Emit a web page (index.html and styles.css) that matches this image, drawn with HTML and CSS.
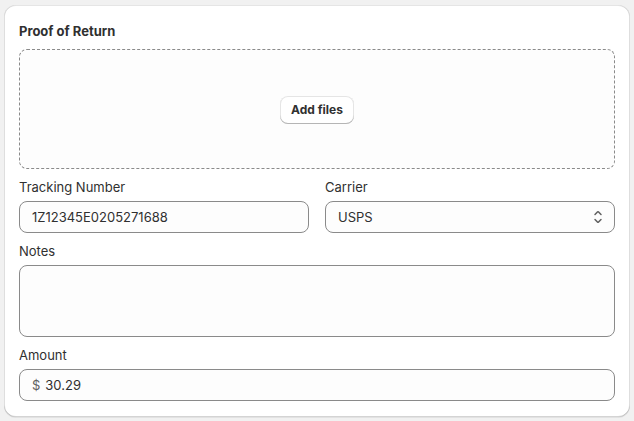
FILE: index.html
```html
<!DOCTYPE html>
<html lang="en">
<head>
<meta charset="utf-8">
<title>Proof of Return</title>
<link rel="stylesheet" href="styles.css">
</head>
<body>
<div class="card">
  <div class="title">Proof of Return</div>
  <div class="dropzone">
    <button class="btn" type="button">Add files</button>
  </div>
  <div class="row">
    <div class="field">
      <label class="label">Tracking Number</label>
      <div class="input"><span class="value">1Z12345E0205271688</span></div>
    </div>
    <div class="field">
      <label class="label">Carrier</label>
      <div class="input select">
        <span class="value">USPS</span>
        <svg class="chev" viewBox="0 0 20 20" width="20" height="20" aria-hidden="true">
          <path d="M10.884 4.323a1.25 1.25 0 0 0-1.768 0l-2.646 2.647a.75.75 0 0 0 1.06 1.06l2.47-2.47 2.47 2.47a.75.75 0 1 0 1.06-1.06l-2.646-2.647Z"/>
          <path d="m13.53 13.03-2.646 2.647a1.25 1.25 0 0 1-1.768 0l-2.646-2.647a.75.75 0 0 1 1.06-1.06l2.47 2.47 2.47-2.47a.75.75 0 0 1 1.06 1.06Z"/>
        </svg>
      </div>
    </div>
  </div>
  <div class="field">
    <label class="label">Notes</label>
    <div class="input textarea"></div>
  </div>
  <div class="field">
    <label class="label">Amount</label>
    <div class="input"><span class="prefix">$</span><span class="value">30.29</span></div>
  </div>
</div>
</body>
</html>
```

FILE: styles.css
```css
* { box-sizing: border-box; }
html, body { margin: 0; padding: 0; }
body {
  background: #f1f1f1;
  font-family: Inter, "Noto Sans", sans-serif;
  color: #303030;
  font-size: 13px;
  line-height: 20px;
  padding: 5px 4px;
}
.card {
  background: #ffffff;
  border-radius: 12px;
  padding: 16px 15px;
  display: flex;
  flex-direction: column;
  gap: 8px;
  box-shadow: 0 1px 0 0 rgba(26,26,26,0.07),
    inset 0 1px 0 0 rgba(204,204,204,0.5),
    inset 0 -1px 0 0 rgba(0,0,0,0.17),
    inset 1px 0 0 0 rgba(0,0,0,0.13),
    inset -1px 0 0 0 rgba(0,0,0,0.13);
}
.title {
  font-weight: 650;
  font-size: 13px;
  line-height: 20px;
  color: #303030;
}
.dropzone {
  height: 120px;
  border: 1px dashed #8a8a8a;
  border-radius: 8px;
  background: #fdfdfd;
  display: flex;
  align-items: center;
  justify-content: center;
}
.btn {
  font-family: Inter, "Noto Sans", sans-serif;
  font-size: 12px;
  font-weight: 650;
  color: #303030;
  height: 28px;
  padding: 0 11px;
  border: none;
  border-radius: 8px;
  background: #ffffff;
  box-shadow: inset 0 -1px 0 0 #b5b5b5, inset 0 0 0 1px rgba(0,0,0,0.1), inset 0 0.5px 0 1.5px #ffffff;
  margin-top: 1px;
}
.row {
  display: grid;
  grid-template-columns: 1fr 1fr;
  gap: 16px;
}
.field {
  display: flex;
  flex-direction: column;
  gap: 4px;
}
.label {
  font-size: 13px;
  line-height: 20px;
  color: #303030;
}
.input {
  height: 32px;
  border: 1px solid #8a8a8a;
  border-radius: 8px;
  background: #fdfdfd;
  display: flex;
  align-items: center;
  padding: 0 12px;
  gap: 5px;
}
.value { color: #303030; }
.prefix { color: #616161; }
.select { justify-content: space-between; padding-right: 6px; }
.chev { fill: #616161; flex: none; }
.textarea { height: 72px; }
```
